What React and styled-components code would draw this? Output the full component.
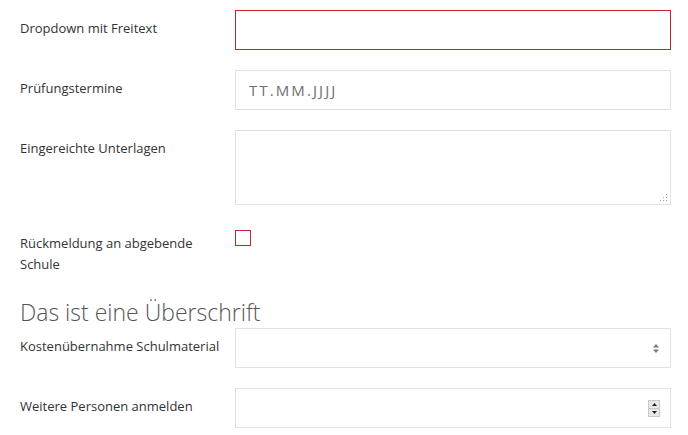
import React from "react";
import styled, { createGlobalStyle } from "styled-components";

const Global = createGlobalStyle`
  html, body {
    margin: 0;
    padding: 0;
    background: #fff;
  }
  body {
    font-family: "Open Sans", "Liberation Sans", sans-serif;
    color: #333;
  }
`;

const Form = styled.form`
  width: 688px;
  padding: 10px 17px 0 20px;
  box-sizing: border-box;
`;

const Row = styled.div`
  display: grid;
  grid-template-columns: 215px 1fr;
  margin-bottom: ${(p) => p.$gap || 20}px;
`;

const Label = styled.label`
  font-size: 13px;
  line-height: 21px;
  color: #333;
  padding-top: 8px;
  padding-right: 10px;
`;

const Box = styled.div`
  position: relative;
  display: flex;
  align-items: center;
  height: ${(p) => p.$h || 40}px;
  box-sizing: border-box;
  border: 1px solid ${(p) => (p.$error ? "#c4262e" : "#e2e2e2")};
  background: #fff;
`;

const Input = styled.input`
  flex: 1;
  height: 100%;
  border: none;
  outline: none;
  background: transparent;
  padding: 0 13px;
  font-family: inherit;
  font-size: 14px;
  color: #333;
  &::placeholder {
    color: #6f6f6f;
    font-size: 15px;
    letter-spacing: 2.1px;
  }
`;

const TextArea = styled.textarea`
  flex: 1;
  align-self: stretch;
  border: none;
  outline: none;
  resize: none;
  padding: 8px 13px;
  font-family: inherit;
  font-size: 14px;
`;

const Grip = styled.div`
  position: absolute;
  right: 3px;
  bottom: 3px;
  width: 8px;
  height: 8px;
  background:
    radial-gradient(circle, #aaa 0.8px, transparent 1px) 0 0 / 3px 3px;
  clip-path: polygon(100% 0, 100% 100%, 0 100%);
`;

const Checkbox = styled.span`
  display: block;
  width: 16px;
  height: 16px;
  box-sizing: border-box;
  margin-top: 5px;
  border: 1px solid #c4262e;
  background: #fff;
`;

const Heading = styled.h2`
  margin: 0 0 1px;
  font-weight: 300;
  font-size: 23px;
  line-height: 30px;
  color: #555;
`;

const SelectArrows = styled.svg`
  margin-right: 11px;
  flex: none;
`;

const Spinner = styled.div`
  display: flex;
  flex-direction: column;
  width: 12px;
  height: 17px;
  margin-right: 10px;
  border: 1px solid #c8c8c8;
  box-sizing: border-box;
  background: #f0f0f0;
`;

const SpinBtn = styled.div`
  flex: 1;
  display: flex;
  align-items: center;
  justify-content: center;
  background: #e8e8e8;
  & + & {
    border-top: 1px solid #c8c8c8;
  }
`;

export default function App() {
  return (
    <>
      <Global />
      <Form>
        <Row>
          <Label>Dropdown mit Freitext</Label>
          <Box $error>
            <Input type="text" />
          </Box>
        </Row>
        <Row>
          <Label>Prüfungstermine</Label>
          <Box>
            <Input type="text" placeholder="TT.MM.JJJJ" />
          </Box>
        </Row>
        <Row>
          <Label>Eingereichte Unterlagen</Label>
          <Box $h={75}>
            <TextArea />
            <Grip />
          </Box>
        </Row>
        <Row $gap={22}>
          <Label>Rückmeldung an abgebende Schule</Label>
          <div>
            <Checkbox />
          </div>
        </Row>
        <Heading>Das ist eine Überschrift</Heading>
        <Row>
          <Label>Kostenübernahme Schulmaterial</Label>
          <Box>
            <Input type="text" />
            <SelectArrows width="6" height="9" viewBox="0 0 6 9">
              <path d="M3 0 L6 3.5 H0 Z" fill="#777" />
              <path d="M3 9 L6 5.5 H0 Z" fill="#777" />
            </SelectArrows>
          </Box>
        </Row>
        <Row>
          <Label>Weitere Personen anmelden</Label>
          <Box>
            <Input type="text" />
            <Spinner>
              <SpinBtn>
                <svg width="5" height="3" viewBox="0 0 5 3">
                  <path d="M2.5 0 L5 3 H0 Z" fill="#222" />
                </svg>
              </SpinBtn>
              <SpinBtn>
                <svg width="5" height="3" viewBox="0 0 5 3">
                  <path d="M2.5 3 L5 0 H0 Z" fill="#222" />
                </svg>
              </SpinBtn>
            </Spinner>
          </Box>
        </Row>
      </Form>
    </>
  );
}
